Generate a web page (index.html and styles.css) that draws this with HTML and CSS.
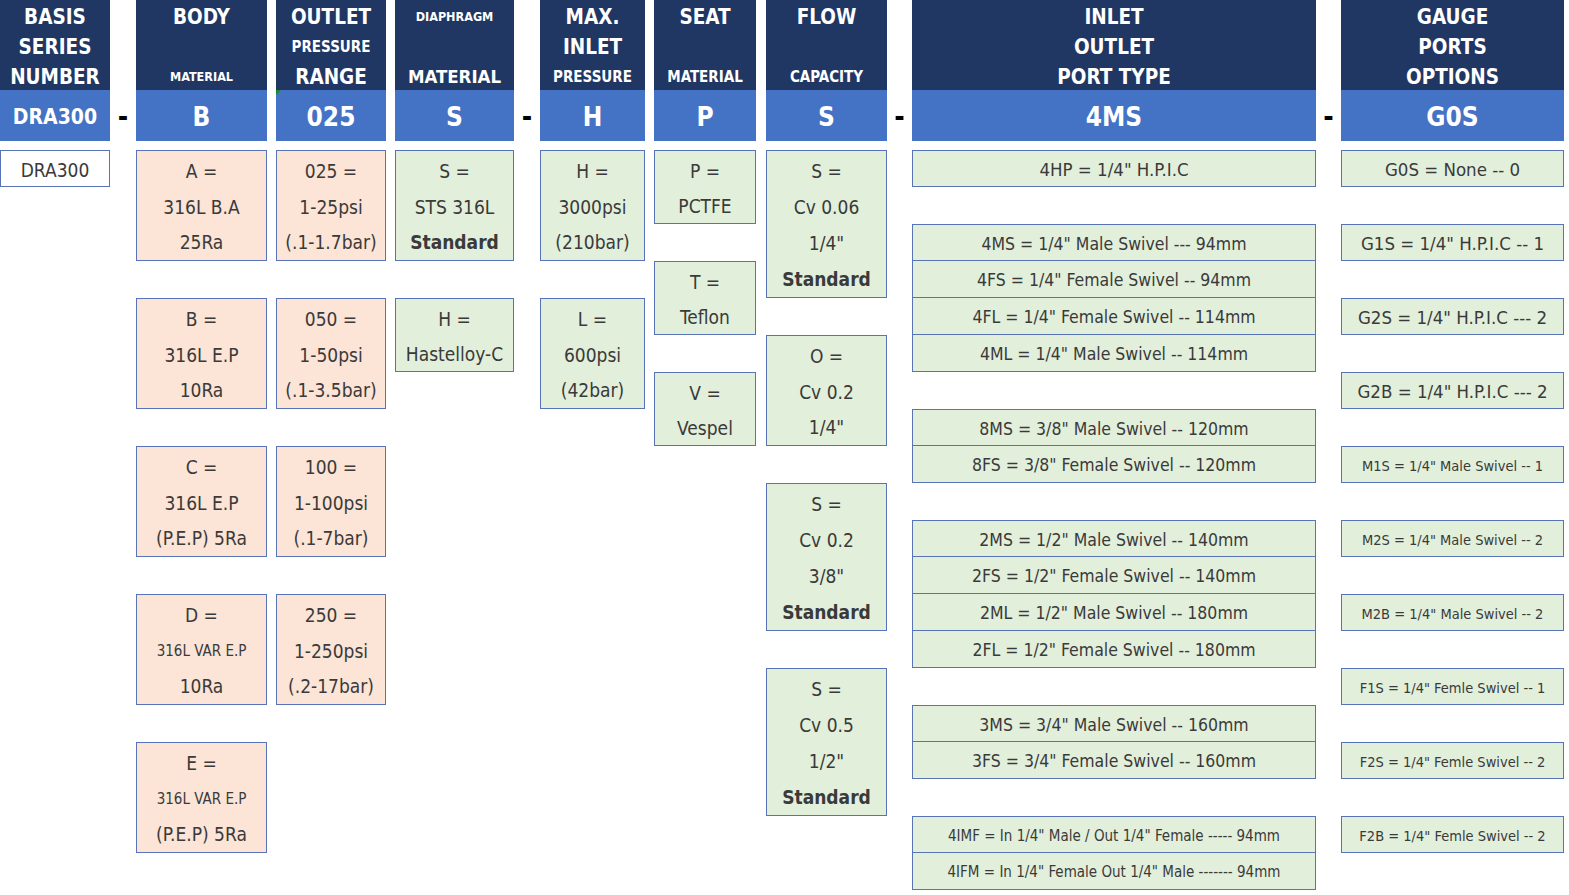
FILE: index.html
```html
<!DOCTYPE html>
<html lang="en">
<head>
<meta charset="utf-8">
<title>DRA300 Ordering Information</title>
<link rel="stylesheet" href="styles.css">
</head>
<body>
<div class="sheet">
  <!-- header row -->
  <div class="hd c1"><div>BASIS</div><div>SERIES</div><div>NUMBER</div></div>
  <div class="hd c2"><div>BODY</div><div></div><div class="f13">MATERIAL</div></div>
  <div class="hd c3"><div>OUTLET</div><div class="f15">PRESSURE</div><div>RANGE</div></div>
  <div class="hd c4"><div class="f12">DIAPHRAGM</div><div></div><div class="f18">MATERIAL</div></div>
  <div class="hd c5"><div>MAX.</div><div>INLET</div><div class="f15">PRESSURE</div></div>
  <div class="hd c6"><div>SEAT</div><div></div><div class="f15">MATERIAL</div></div>
  <div class="hd c7"><div>FLOW</div><div></div><div class="f15">CAPACITY</div></div>
  <div class="hd c8"><div>INLET</div><div>OUTLET</div><div>PORT TYPE</div></div>
  <div class="hd c9"><div>GAUGE</div><div>PORTS</div><div>OPTIONS</div></div>

  <!-- code row -->
  <div class="code c1 small">DRA300</div>
  <div class="dash g1">-</div>
  <div class="code c2">B</div>
  <div class="code c3 noted">025</div>
  <div class="code c4">S</div>
  <div class="dash g4">-</div>
  <div class="code c5">H</div>
  <div class="code c6">P</div>
  <div class="code c7">S</div>
  <div class="dash g7">-</div>
  <div class="code c8">4MS</div>
  <div class="dash g8">-</div>
  <div class="code c9">G0S</div>

  <!-- option columns -->
  <div class="col c1">
    <div class="box wh r0 s1"><div>DRA300</div></div>
  </div>

  <div class="col c2">
    <div class="box pe r0 s3"><div>A =</div><div>316L B.A</div><div>25Ra</div></div>
    <div class="box pe r4 s3"><div>B =</div><div>316L E.P</div><div>10Ra</div></div>
    <div class="box pe r8 s3"><div>C =</div><div>316L E.P</div><div>(P.E.P) 5Ra</div></div>
    <div class="box pe r12 s3"><div>D =</div><div class="f15">316L VAR E.P</div><div>10Ra</div></div>
    <div class="box pe r16 s3"><div>E =</div><div class="f15">316L VAR E.P</div><div>(P.E.P) 5Ra</div></div>
  </div>

  <div class="col c3">
    <div class="box pe r0 s3"><div>025 =</div><div>1-25psi</div><div>(.1-1.7bar)</div></div>
    <div class="box pe r4 s3"><div>050 =</div><div>1-50psi</div><div>(.1-3.5bar)</div></div>
    <div class="box pe r8 s3"><div>100 =</div><div>1-100psi</div><div>(.1-7bar)</div></div>
    <div class="box pe r12 s3"><div>250 =</div><div>1-250psi</div><div>(.2-17bar)</div></div>
  </div>

  <div class="col c4">
    <div class="box gr r0 s3"><div>S =</div><div>STS 316L</div><div class="b">Standard</div></div>
    <div class="box gr r4 s2"><div>H =</div><div>Hastelloy-C</div></div>
  </div>

  <div class="col c5">
    <div class="box gr r0 s3"><div>H =</div><div>3000psi</div><div>(210bar)</div></div>
    <div class="box gr r4 s3"><div>L =</div><div>600psi</div><div>(42bar)</div></div>
  </div>

  <div class="col c6">
    <div class="box gr r0 s2"><div>P =</div><div>PCTFE</div></div>
    <div class="box gr r3 s2"><div>T =</div><div>Teflon</div></div>
    <div class="box gr r6 s2"><div>V =</div><div>Vespel</div></div>
  </div>

  <div class="col c7">
    <div class="box gr r0 s4"><div>S =</div><div>Cv 0.06</div><div>1/4"</div><div class="b">Standard</div></div>
    <div class="box gr r5 s3"><div>O =</div><div>Cv 0.2</div><div>1/4"</div></div>
    <div class="box gr r9 s4"><div>S =</div><div>Cv 0.2</div><div>3/8"</div><div class="b">Standard</div></div>
    <div class="box gr r14 s4"><div>S =</div><div>Cv 0.5</div><div>1/2"</div><div class="b">Standard</div></div>
  </div>

  <div class="col c8 port">
    <div class="box gr r0 s1 big"><div>4HP = 1/4" H.P.I.C</div></div>
    <div class="box gr r2 s1"><div>4MS = 1/4" Male Swivel --- 94mm</div></div>
    <div class="box gr r3 s1 cont"><div>4FS = 1/4" Female Swivel -- 94mm</div></div>
    <div class="box gr r4 s1 cont"><div>4FL = 1/4" Female Swivel -- 114mm</div></div>
    <div class="box gr r5 s1 cont"><div>4ML = 1/4" Male Swivel -- 114mm</div></div>
    <div class="box gr r7 s1"><div>8MS = 3/8" Male Swivel -- 120mm</div></div>
    <div class="box gr r8 s1 cont"><div>8FS = 3/8" Female Swivel -- 120mm</div></div>
    <div class="box gr r10 s1"><div>2MS = 1/2" Male Swivel -- 140mm</div></div>
    <div class="box gr r11 s1 cont"><div>2FS = 1/2" Female Swivel -- 140mm</div></div>
    <div class="box gr r12 s1 cont"><div>2ML = 1/2" Male Swivel -- 180mm</div></div>
    <div class="box gr r13 s1 cont"><div>2FL = 1/2" Female Swivel -- 180mm</div></div>
    <div class="box gr r15 s1"><div>3MS = 3/4" Male Swivel -- 160mm</div></div>
    <div class="box gr r16 s1 cont"><div>3FS = 3/4" Female Swivel -- 160mm</div></div>
    <div class="box gr r18 s1 f15"><div>4IMF = In 1/4" Male / Out 1/4" Female ----- 94mm</div></div>
    <div class="box gr r19 s1 cont f15"><div>4IFM = In 1/4" Female Out 1/4" Male ------- 94mm</div></div>
  </div>

  <div class="col c9 gauge">
    <div class="box gr r0 s1"><div>G0S = None -- 0</div></div>
    <div class="box gr r2 s1"><div>G1S = 1/4" H.P.I.C -- 1</div></div>
    <div class="box gr r4 s1"><div>G2S = 1/4" H.P.I.C --- 2</div></div>
    <div class="box gr r6 s1"><div>G2B = 1/4" H.P.I.C --- 2</div></div>
    <div class="box gr r8 s1 f14"><div>M1S = 1/4" Male Swivel -- 1</div></div>
    <div class="box gr r10 s1 f14"><div>M2S = 1/4" Male Swivel -- 2</div></div>
    <div class="box gr r12 s1 f14"><div>M2B = 1/4" Male Swivel -- 2</div></div>
    <div class="box gr r14 s1 f14"><div>F1S = 1/4" Femle Swivel -- 1</div></div>
    <div class="box gr r16 s1 f14"><div>F2S = 1/4" Femle Swivel -- 2</div></div>
    <div class="box gr r18 s1 f14"><div>F2B = 1/4" Femle Swivel -- 2</div></div>
  </div>
</div>
</body>
</html>
```

FILE: styles.css
```css
html, body {
  margin: 0;
  padding: 0;
  background: #ffffff;
}

body {
  font-family: "DejaVu Sans Condensed", "DejaVu Sans", sans-serif;
  color: #3a3a3a;
  width: 1569px;
  height: 895px;
  overflow: hidden;
}

.sheet {
  display: grid;
  grid-template-columns: 110px 26px 131px 9px 110px 9px 119px 26px 105px 9px 102px 10px 121px 25px 404px 25px 223px;
  grid-template-rows: 90px 51px 9px 740px;
}

.c1 { grid-column: 1; }
.g1 { grid-column: 2; }
.c2 { grid-column: 3; }
.c3 { grid-column: 5; }
.c4 { grid-column: 7; }
.g4 { grid-column: 8; }
.c5 { grid-column: 9; }
.c6 { grid-column: 11; }
.c7 { grid-column: 13; }
.g7 { grid-column: 14; }
.c8 { grid-column: 15; }
.g8 { grid-column: 16; }
.c9 { grid-column: 17; }

/* header */
.hd {
  grid-row: 1;
  background: #203764;
  color: #ffffff;
  font-weight: bold;
  font-size: 20.5px;
  line-height: 30px;
  text-align: center;
  padding-top: 2px;
  box-sizing: border-box;
  white-space: nowrap;
}
.hd > div { height: 30px; }

.f12 { font-size: 12.5px; }
.f13 { font-size: 12.5px; }
.f14 { font-size: 14.5px; }
.f15 { font-size: 15px; }
.f18 { font-size: 18.5px; }

/* code row */
.code {
  grid-row: 2;
  background: #4472c4;
  color: #ffffff;
  font-weight: bold;
  font-size: 26px;
  display: flex;
  align-items: center;
  justify-content: center;
  position: relative;
  padding-top: 2px;
  box-sizing: border-box;
}
.code.small { font-size: 21px; }
.noted::before {
  content: "";
  position: absolute;
  left: 0;
  top: 0;
  width: 0;
  height: 0;
  border-top: 5px solid #1e8a2c;
  border-right: 5px solid transparent;
}

.dash {
  grid-row: 2;
  display: flex;
  align-items: center;
  justify-content: center;
  font-weight: bold;
  font-size: 28px;
  color: #000000;
  padding-top: 2px;
  box-sizing: border-box;
}

/* option columns */
.col {
  grid-row: 4;
  display: grid;
  grid-template-rows: repeat(20, 37px);
}

.r0 { grid-row-start: 1; }
.r2 { grid-row-start: 3; }
.r3 { grid-row-start: 4; }
.r4 { grid-row-start: 5; }
.r5 { grid-row-start: 6; }
.r6 { grid-row-start: 7; }
.r7 { grid-row-start: 8; }
.r8 { grid-row-start: 9; }
.r9 { grid-row-start: 10; }
.r10 { grid-row-start: 11; }
.r11 { grid-row-start: 12; }
.r12 { grid-row-start: 13; }
.r13 { grid-row-start: 14; }
.r14 { grid-row-start: 15; }
.r15 { grid-row-start: 16; }
.r16 { grid-row-start: 17; }
.r18 { grid-row-start: 19; }
.r19 { grid-row-start: 20; }

.s1 { grid-row-end: span 1; }
.s2 { grid-row-end: span 2; }
.s3 { grid-row-end: span 3; }
.s4 { grid-row-end: span 4; }

.box {
  border: 1px solid #5874b6;
  box-sizing: border-box;
  display: flex;
  flex-direction: column;
  font-size: 19px;
  text-align: center;
  white-space: nowrap;
  padding-top: 2px;
}
.box > div {
  flex: 1;
  display: flex;
  align-items: center;
  justify-content: center;
}
.box.cont { border-top: 0; padding-top: 1px; }

.pe { background: #fce4d6; }
.gr { background: #e2efda; }
.wh { background: #ffffff; }

.b { font-weight: bold; }

.port .box { font-size: 17.5px; }
.port .box.big { font-size: 18.5px; }
.port .box.f15 { font-size: 15px; }
.gauge .box { font-size: 18.5px; }
.gauge .box.f14 { font-size: 14.5px; }
```
